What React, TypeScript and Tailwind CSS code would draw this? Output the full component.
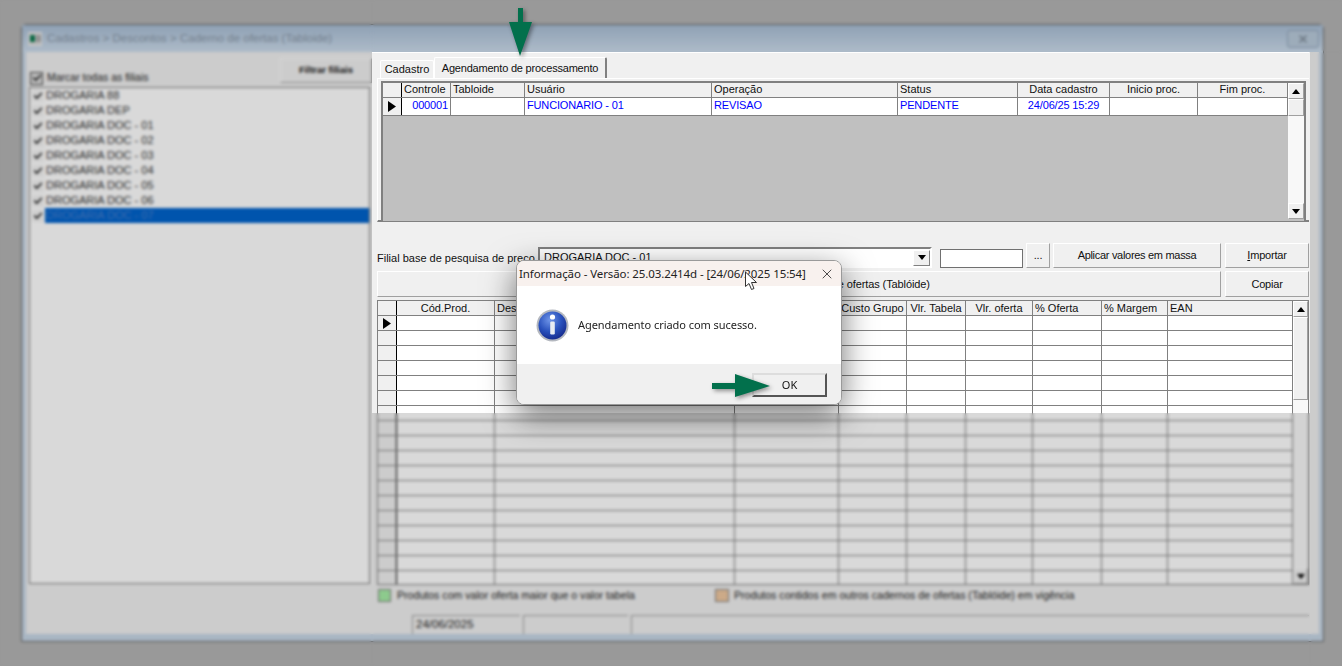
import React from 'react';
import { Check, X } from 'lucide-react';

const filiais = [
  'DROGARIA 88',
  'DROGARIA DEP',
  'DROGARIA DOC - 01',
  'DROGARIA DOC - 02',
  'DROGARIA DOC - 03',
  'DROGARIA DOC - 04',
  'DROGARIA DOC - 05',
  'DROGARIA DOC - 06',
  'DROGARIA DOC - 07',
];

const upperCols = 'grid-cols-[19px_49px_74px_187px_186px_120px_92px_88px_90px]';
const lowerCols = 'grid-cols-[19px_98px_240px_104px_68px_59px_67px_69px_66px_125px]';

const upperHead: [string, string][] = [
  ['', ''],
  ['Controle', 'text-left'],
  ['Tabloide', 'text-left'],
  ['Usuário', 'text-left'],
  ['Operação', 'text-left'],
  ['Status', 'text-left'],
  ['Data cadastro', 'text-center'],
  ['Inicio proc.', 'text-center'],
  ['Fim proc.', 'text-center'],
];

const lowerHead: [string, string][] = [
  ['', ''],
  ['Cód.Prod.', 'text-center'],
  ['Descrição', 'text-left'],
  ['', ''],
  ['Custo Grupo', 'text-center'],
  ['Vlr. Tabela', 'text-center'],
  ['Vlr. oferta', 'text-center'],
  ['% Oferta', 'text-left'],
  ['% Margem', 'text-left'],
  ['EAN', 'text-left'],
];

function Triangle() {
  return (
    <svg width="8" height="11" viewBox="0 0 8 11" className="mx-auto">
      <path d="M0 0 L8 5.5 L0 11 Z" fill="#000" />
    </svg>
  );
}

function ScrollBtn({ dir }: { dir: 'up' | 'down' }) {
  return (
    <div className="flex h-[16px] w-full shrink-0 items-center justify-center border border-[#a0a0a0] border-t-white border-l-white bg-[#f0f0f0]">
      <svg width="8" height="5" viewBox="0 0 8 5">
        <path d={dir === 'up' ? 'M4 0 L8 5 L0 5 Z' : 'M0 0 L8 0 L4 5 Z'} fill="#000" />
      </svg>
    </div>
  );
}

function Btn({ className, children }: { className: string; children: React.ReactNode }) {
  return (
    <div className={`flex items-center justify-center whitespace-nowrap border border-white border-r-[#a0a0a0] border-b-[#a0a0a0] bg-[#f0f0f0] text-[11px] tracking-[-0.2px] text-[#111] ${className}`}>
      {children}
    </div>
  );
}

function InfoIcon() {
  return (
    <svg width="33" height="33" viewBox="0 0 33 33" className="shrink-0">
      <defs>
        <radialGradient id="infoBlue" cx="40%" cy="30%" r="75%">
          <stop offset="0%" stopColor="#6f95e8" />
          <stop offset="55%" stopColor="#2a52bd" />
          <stop offset="100%" stopColor="#14288a" />
        </radialGradient>
      </defs>
      <circle cx="16.5" cy="16.5" r="16" fill="#b4b8bf" />
      <circle cx="16.5" cy="16.5" r="14" fill="url(#infoBlue)" />
      <circle cx="16.5" cy="8" r="2.6" fill="#fff" />
      <rect x="14.2" y="12.5" width="4.6" height="13" rx="1.2" fill="#e8ecf2" />
    </svg>
  );
}

export default function App() {
  return (
    <div className="relative h-[666px] w-[1342px] overflow-hidden bg-[#b4b4b4] pl-[21px] pt-[24px] font-['Liberation_Sans',sans-serif]">
      <div className="flex h-[618px] w-[1303px] flex-col rounded-t-[5px] border border-[#666] bg-[#c6d6e6]">
        <div className="flex h-[27px] shrink-0 items-center bg-gradient-to-b from-[#a8bdd4] to-[#ccdcec] pl-[6px] pr-[4px]">
          <div className="mr-[5px] flex h-[14px] w-[14px] items-center gap-[1px] border border-[#eee] bg-[#d8d8d8] pl-[1px]">
            <div className="h-[7px] w-[5px] bg-[#0d7a50]" />
            <div className="h-[7px] w-[5px] bg-[#aaa]" />
          </div>
          <span className="text-[11.5px] text-[#8796a6]">Cadastros &gt; Descontos &gt; Caderno de ofertas (Tabloide)</span>
          <div className="ml-auto flex h-[18px] w-[32px] items-center justify-center rounded-[3px] border border-[#8fa4ba] bg-[#b9cadb]">
            <X size={12} strokeWidth={3.5} color="#7f8c99" />
          </div>
        </div>

        <div className="mx-[4px] flex h-[582px] w-[1293px] bg-[#f0f0f0]">
          <div className="w-[346px] shrink-0 pl-[3px]">
            <div className="flex h-[35px] items-end justify-between">
              <div className="mb-[1px] flex items-center">
                <div className="ml-[1px] flex h-[13px] w-[13px] items-center justify-center border border-[#444] bg-[#ddd]">
                  <Check size={10} strokeWidth={4} color="#222" />
                </div>
                <span className="ml-[4px] text-[10.5px] text-[#222]">Marcar todas as filiais</span>
              </div>
              <Btn className="mb-[4px] h-[25px] w-[92px] font-bold !text-[9.5px] !tracking-normal">Filtrar filiais</Btn>
            </div>
            <div className="h-[497px] w-[341px] border border-[#808080] bg-white">
              {filiais.map((f, i) => (
                <div key={f} className="flex h-[15px] items-center pl-[2px]">
                  <div className="flex h-[12px] w-[12px] shrink-0 items-center justify-center bg-[#f4f4f4]">
                    <Check size={10} strokeWidth={4} color="#222" />
                  </div>
                  <div className={`ml-[1px] flex h-[15px] flex-1 items-center pl-[1px] text-[11px] ${i === 8 ? 'bg-[#0063cc] text-[#4a80cc]' : 'text-[#333]'}`}>
                    {f}
                  </div>
                </div>
              ))}
            </div>
          </div>

          <div className="h-full w-[937px] shrink-0 border-t border-white">
            <div className="flex h-[25px] items-end whitespace-nowrap pl-[8px] text-[11px] text-[#111]">
              <div className="flex h-[18px] w-[54px] items-center justify-center rounded-t-[2px] border border-b-0 border-white">Cadastro</div>
              <div className="flex h-[21px] w-[173px] items-center justify-center rounded-t-[2px] border-t border-l border-r-2 border-white border-r-[#808080] tracking-[-0.2px]">Agendamento de processamento</div>
            </div>
            <div className="ml-[5px] h-[144px] w-[932px] border-b-2 border-l border-t border-[#fff] border-b-[#808080] pl-[3px] pt-[2px]">
              <div className="flex h-[140px] w-[925px] border-2 border-b-0 border-[#808080] bg-[#c0c0c0]">
                <div className="w-[905px] shrink-0">
                  <div className={`grid h-[15px] ${upperCols} border-b border-[#808080] bg-[#f0f0f0] text-[11px] leading-[13px] text-[#111]`}>
                    {upperHead.map(([t, a], i) => (
                      <div key={i} className={`overflow-hidden whitespace-nowrap border-r border-[#808080] px-[2px] ${a} ${i === 0 ? '!border-black' : ''}`}>{t}</div>
                    ))}
                  </div>
                  <div className={`grid h-[18px] ${upperCols} border-b border-[#808080] bg-white text-[11px] leading-[15px] tracking-[-0.15px] text-[#0000ff]`}>
                    <div className="flex items-center border-r border-black bg-[#f0f0f0]"><Triangle /></div>
                    <div className="border-r border-[#808080] pr-[2px] text-right">000001</div>
                    <div className="border-r border-[#808080]" />
                    <div className="border-r border-[#808080] pl-[2px]">FUNCIONARIO - 01</div>
                    <div className="border-r border-[#808080] pl-[2px]">REVISAO</div>
                    <div className="border-r border-[#808080] pl-[2px]">PENDENTE</div>
                    <div className="border-r border-[#808080] text-center">24/06/25 15:29</div>
                    <div className="border-r border-[#808080]" />
                    <div className="border-r border-[#808080]" />
                  </div>
                </div>
                <div className="flex h-[136px] flex-1 flex-col bg-[#f8f8f8]">
                  <ScrollBtn dir="up" />
                  <div className="h-[17px] border border-[#a0a0a0] border-t-white border-l-white bg-[#f0f0f0]" />
                  <div className="flex-1" />
                  <ScrollBtn dir="down" />
                </div>
              </div>
            </div>

            <div className="ml-[5px] mt-[21px] flex h-[25px] w-[932px] text-[11px] text-[#111]">
              <span className="w-[161px] self-end whitespace-nowrap pb-[3px] leading-[14px]">Filial base de pesquisa de preço</span>
              <div className="flex h-[21px] w-[394px] items-center justify-between self-end border-2 border-[#808080] border-r-white border-b-white bg-white pl-[4px]">
                <span>DROGARIA DOC - 01</span>
                <div className="flex h-[16px] w-[17px] items-center justify-center border border-[#808080] border-l-white border-t-white bg-[#f0f0f0]">
                  <svg width="8" height="5" viewBox="0 0 8 5"><path d="M0 0 L8 0 L4 5 Z" fill="#000" /></svg>
                </div>
              </div>
              <div className="ml-[8px] h-[19px] w-[83px] self-end border border-[#707070] bg-white" />
              <Btn className="ml-[3px] h-[25px] w-[24px]">...</Btn>
              <Btn className="ml-[3px] h-[25px] w-[168px] !tracking-[-0.3px]">Aplicar valores em massa</Btn>
              <Btn className="ml-[4px] h-[25px] w-[84px]"><span><span className="underline">I</span>mportar</span></Btn>
            </div>
            <div className="ml-[5px] mt-[3px] flex h-[26px] w-[932px]">
              <Btn className="h-[26px] w-[844px] !tracking-[-0.1px]">Importar produtos para o caderno de ofertas (Tablóide)</Btn>
              <Btn className="ml-[4px] h-[26px] w-[84px]">Copiar</Btn>
            </div>

            <div className="ml-[5px] mt-[3px] flex h-[285px] w-[932px] overflow-hidden border border-[#808080] bg-white">
              <div className="w-[915px] shrink-0">
                <div className={`grid h-[15px] ${lowerCols} border-b border-[#808080] bg-[#f0f0f0] text-[11px] leading-[14px] text-[#111]`}>
                  {lowerHead.map(([t, a], i) => (
                    <div key={i} className={`overflow-hidden whitespace-nowrap border-r px-[2px] ${i === 0 ? 'border-black' : 'border-[#808080]'} ${a}`}>{t}</div>
                  ))}
                </div>
                {Array.from({ length: 18 }).map((_, r) => (
                  <div key={r} className={`grid h-[15px] ${lowerCols} border-b border-[#808080]`}>
                    {lowerHead.map((_, i) => (
                      <div key={i} className={i === 0 ? 'flex items-center border-r border-black bg-[#f0f0f0]' : 'border-r border-[#808080]'}>
                        {i === 0 && r === 0 && <Triangle />}
                      </div>
                    ))}
                  </div>
                ))}
              </div>
              <div className="flex flex-1 flex-col bg-[#f8f8f8]">
                <ScrollBtn dir="up" />
                <div className="h-[83px] border border-[#a0a0a0] border-t-white border-l-white bg-[#f0f0f0]" />
                <div className="flex-1" />
                <ScrollBtn dir="down" />
              </div>
            </div>

            <div className="ml-[5px] mt-[3px] flex h-[14px] items-center text-[10.6px] text-[#222]">
              <div className="ml-[1px] h-[13px] w-[13px] border border-[#808080] bg-[#a6eea6]" />
              <span className="ml-[6px] w-[318px] pt-[1px]">Produtos com valor oferta maior que o valor tabela</span>
              <div className="h-[13px] w-[14px] border border-[#808080] bg-[#f0c8a0]" />
              <span className="ml-[5px] pt-[1px]">Produtos contidos em outros cadernos de ofertas (Tablóide) em vigência</span>
            </div>
            <div className="ml-[40px] mt-[13px] flex h-[19px] gap-[3px] text-[11.5px] text-[#222]">
              <div className="w-[108px] border-l border-t border-[#a0a0a0] pl-[3px] leading-[17px]">24/06/2025</div>
              <div className="w-[105px] border-l border-t border-[#a0a0a0]" />
              <div className="w-[679px] border-l border-t border-[#a0a0a0]" />
            </div>
          </div>
        </div>
      </div>

      {/* esmaecido em volta da area nitida */}
      <div className="absolute left-0 top-0 h-[666px] w-[372px] bg-black/15 backdrop-blur-[1.5px]" />
      <div className="absolute left-[372px] top-0 h-[52px] w-[970px] bg-black/15 backdrop-blur-[1.5px]" />
      <div className="absolute left-[1310px] top-[52px] h-[614px] w-[32px] bg-black/15 backdrop-blur-[1.5px]" />
      <div className="absolute left-[372px] top-[413px] h-[253px] w-[938px] bg-black/15 backdrop-blur-[1.5px]" />

      {/* seta do topo */}
      <svg className="absolute left-[505px] top-[6px] drop-shadow-[2px_2px_2px_rgba(0,0,0,0.4)]" width="30" height="52" viewBox="0 0 30 52">
        <path d="M13 2 H18 V16 H27 L15 50 L4 16 H13 Z" fill="#02704c" />
      </svg>

      <div className="absolute left-[516px] top-[260px] flex h-[145px] w-[326px] flex-col overflow-hidden rounded-[8px] border border-[#9a9a9a] bg-white shadow-[0_10px_32px_rgba(0,0,0,0.55)]">
        <div className="flex h-[25px] shrink-0 items-center justify-between bg-[#f8f1ee] pl-[2px] pr-[6px] font-['Noto_Sans',sans-serif] text-[11.5px] tracking-[-0.1px] text-[#222]">
          <span className="whitespace-nowrap">Informação - Versão: 25.03.2414d - [24/06/2025 15:54]</span>
          <X size={16} strokeWidth={1.2} color="#222" className="shrink-0" />
        </div>
        <div className="flex h-[78px] shrink-0 items-center pl-[19px]">
          <InfoIcon />
          <span className="ml-[9px] font-['Noto_Sans',sans-serif] text-[11px] tracking-[-0.05px] text-[#222]">Agendamento criado com sucesso.</span>
        </div>
        <div className="flex flex-1 items-start justify-end bg-[#f0f0f0] pr-[14px] pt-[9px]">
          <div className="flex h-[24px] w-[75px] items-center justify-center border-2 border-[#555] border-l-[#ddd] border-t-[#ddd] bg-[#f0f0f0] font-['Noto_Sans',sans-serif] text-[11px] text-[#111]">OK</div>
        </div>
      </div>

      {/* ponteiro do mouse */}
      <svg className="absolute left-[744px] top-[271px]" width="14" height="20" viewBox="0 0 14 20">
        <path d="M1.5 1 V15.5 L5 12.5 L7.5 18.5 L10 17.5 L7.5 11.5 L12.5 11.5 Z" fill="#fff" stroke="#333" strokeWidth="1" />
      </svg>

      {/* seta do OK */}
      <svg className="absolute left-[710px] top-[373px] drop-shadow-[2px_2px_2px_rgba(0,0,0,0.4)]" width="62" height="28" viewBox="0 0 62 28">
        <path d="M2 10 H25 V1 L60 13 L25 24 V16 H2 Z" fill="#02704c" />
      </svg>
    </div>
  );
}
